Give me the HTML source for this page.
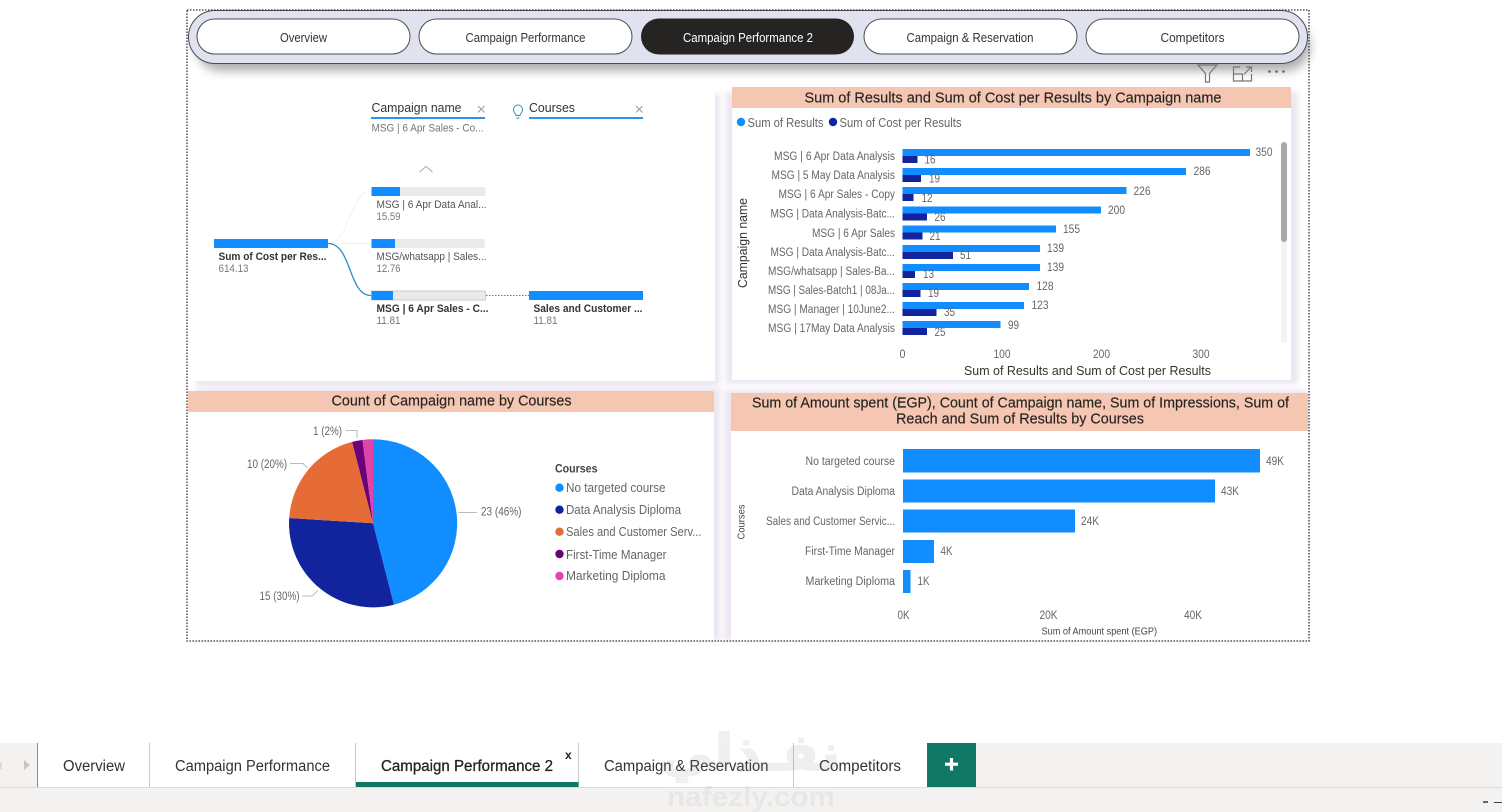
<!DOCTYPE html>
<html lang="en">
<head>
<meta charset="utf-8">
<title>Campaign Performance 2</title>
<style>
html,body{margin:0;padding:0;background:#fff;width:1502px;height:812px;overflow:hidden}
svg{display:block}
text{font-family:"Liberation Sans",sans-serif}
.g{fill:#666;font-size:11.5px}
.d{fill:#666;font-size:12.5px}
.b{fill:#333;font-size:11px;font-weight:bold}
.v{fill:#777;font-size:11px}
.t{fill:#252423;font-size:14.5px;stroke:#252423;stroke-width:.15}
.n{fill:#333;font-size:13px}
.tab{fill:#333;font-size:15.5px}
.soft{filter:blur(.3px)}
</style>
</head>
<body>
<svg width="1502" height="812" viewBox="0 0 1502 812" xmlns="http://www.w3.org/2000/svg">
<defs>
<filter id="sh" x="-5%" y="-40%" width="110%" height="190%"><feGaussianBlur stdDeviation="5"/></filter>
<filter id="ps" x="-5%" y="-5%" width="110%" height="110%"><feGaussianBlur stdDeviation="3"/></filter>
</defs>
<rect width="1502" height="812" fill="#fff"/>
<g class="soft">

<!-- panel shadows -->
<rect x="196" y="94" width="524" height="292" fill="#ebe5f1" filter="url(#ps)"/>
<rect x="726" y="92" width="572" height="292" fill="#ebe5f1" filter="url(#ps)"/>
<rect x="196" y="388" width="524" height="252" fill="#ebe5f1" filter="url(#ps)"/>
<rect x="724" y="390" width="584" height="250" fill="#ebe5f1" filter="url(#ps)"/>

<!-- nav -->
<rect x="196" y="21" width="1114" height="50" rx="25" fill="#777" opacity=".6" filter="url(#sh)"/>
<rect x="188.500" y="10.500" width="1119" height="53" rx="26.500" fill="#e0e2f0" stroke="#4a4a55"/>
<rect x="197" y="19" width="213" height="35" rx="17.500" fill="#fff" stroke="#4c4c4c"/>
<rect x="419" y="19" width="213" height="35" rx="17.500" fill="#fff" stroke="#4c4c4c"/>
<rect x="641" y="18.500" width="213" height="36" rx="18" fill="#252423"/>
<rect x="864" y="19" width="213" height="35" rx="17.500" fill="#fff" stroke="#4c4c4c"/>
<rect x="1086" y="19" width="213" height="35" rx="17.500" fill="#fff" stroke="#4c4c4c"/>
<text class="n" x="280" y="42" textLength="47" lengthAdjust="spacingAndGlyphs">Overview</text>
<text class="n" x="465.500" y="42" textLength="120" lengthAdjust="spacingAndGlyphs">Campaign Performance</text>
<text class="n" x="683" y="42" textLength="130" lengthAdjust="spacingAndGlyphs" style="fill:#fff">Campaign Performance 2</text>
<text class="n" x="906.500" y="42" textLength="127" lengthAdjust="spacingAndGlyphs">Campaign &amp; Reservation</text>
<text class="n" x="1160.500" y="42" textLength="64" lengthAdjust="spacingAndGlyphs">Competitors</text>

<!-- top-left panel: decomposition tree -->
<rect x="188" y="88" width="527" height="293" fill="#fff"/>
<text x="371.500" y="112" textLength="90" lengthAdjust="spacingAndGlyphs" style="fill:#333;font-size:13px">Campaign name</text>
<rect x="371" y="117" width="114" height="2" fill="#2a93f0"/>
<path d="M478 106l6.500 6.500M484.500 106l-6.500 6.500" stroke="#999" fill="none"/>
<text class="v" x="371.500" y="131.500" textLength="112" lengthAdjust="spacingAndGlyphs">MSG | 6 Apr Sales - Co...</text>
<path d="M516 115.500c0-2-2.500-2.500-2.500-6a4.500 4.500 0 0 1 9 0c0 3.500-2.500 4-2.500 6zM516.500 118h3" stroke="#2a8fc8" fill="none"/>
<text x="529" y="112" textLength="46" lengthAdjust="spacingAndGlyphs" style="fill:#333;font-size:13px">Courses</text>
<rect x="529" y="117" width="114" height="2" fill="#2a93f0"/>
<path d="M636 106l6.500 6.500M642.500 106l-6.500 6.500" stroke="#999" fill="none"/>
<path d="M419.500 172l6.500-5.500 6.500 5.500" stroke="#bbb" fill="none" stroke-width="1.300"/>

<path d="M328 243.500C350 243.500 350 191 371 191" stroke="#f2f2f2" fill="none"/>
<path d="M328 243.500H371" stroke="#f0f0f0" fill="none"/>
<path d="M328 243.500C352 243.500 348 295.500 371 295.500" stroke="#2a8fc8" fill="none" stroke-width="1.300"/>
<path d="M486 295.500H529" stroke="#2a8fc8" fill="none" stroke-dasharray="1.500 1.500"/>

<rect x="214" y="239" width="114" height="9" fill="#118dff"/>
<text class="b" x="218.500" y="260" textLength="108" lengthAdjust="spacingAndGlyphs">Sum of Cost per Res...</text>
<text class="v" x="218.500" y="272" textLength="30" lengthAdjust="spacingAndGlyphs">614.13</text>

<rect x="371.500" y="187" width="114" height="9" fill="#eaeaea"/>
<rect x="371.500" y="187" width="28.500" height="9" fill="#118dff"/>
<text class="v" x="376.500" y="208" textLength="110" lengthAdjust="spacingAndGlyphs" style="fill:#555">MSG | 6 Apr Data Anal...</text>
<text class="v" x="376.500" y="220" textLength="24" lengthAdjust="spacingAndGlyphs">15.59</text>

<rect x="371.500" y="239" width="113" height="9" fill="#eaeaea"/>
<rect x="371.500" y="239" width="23.500" height="9" fill="#118dff"/>
<text class="v" x="376.500" y="260" textLength="110" lengthAdjust="spacingAndGlyphs" style="fill:#555">MSG/whatsapp | Sales...</text>
<text class="v" x="376.500" y="272" textLength="24" lengthAdjust="spacingAndGlyphs">12.76</text>

<rect x="371.500" y="291" width="114" height="9" fill="#eaeaea" stroke="#ccc"/>
<rect x="371.500" y="291" width="21.500" height="9" fill="#118dff"/>
<text class="b" x="376.500" y="312" textLength="112" lengthAdjust="spacingAndGlyphs">MSG | 6 Apr Sales - C...</text>
<text class="v" x="376.500" y="324" textLength="24" lengthAdjust="spacingAndGlyphs">11.81</text>

<rect x="529" y="291" width="114" height="9" fill="#118dff"/>
<text class="b" x="533.500" y="312" textLength="109" lengthAdjust="spacingAndGlyphs">Sales and Customer ...</text>
<text class="v" x="533.500" y="324" textLength="24" lengthAdjust="spacingAndGlyphs">11.81</text>

<!-- visual header icons -->
<path d="M1198 65h19l-7.500 8.500v8.500h-4v-8.500z" fill="none" stroke="#777" stroke-width="1.200"/>
<path d="M1240 67h-6.500v14h18v-7M1233.500 74h9v7M1244 74.500l7-7.500M1246 67h5.500v5" fill="none" stroke="#777" stroke-width="1.200"/>
<circle cx="1269.500" cy="71.500" r="1.300" fill="#666"/><circle cx="1276.500" cy="71.500" r="1.300" fill="#666"/><circle cx="1283.500" cy="71.500" r="1.300" fill="#666"/>

<!-- top-right panel -->
<rect x="732" y="88" width="559" height="292" fill="#fff"/>
<rect x="732" y="87" width="559" height="21" fill="#f5c7b2"/>
<text class="t" x="804.500" y="102.500" textLength="417" lengthAdjust="spacingAndGlyphs">Sum of Results and Sum of Cost per Results by Campaign name</text>
<circle cx="741" cy="122" r="4.200" fill="#118dff"/>
<text class="d" x="747.500" y="127" textLength="76" lengthAdjust="spacingAndGlyphs">Sum of Results</text>
<circle cx="833" cy="122" r="4.200" fill="#12239e"/>
<text class="d" x="839.500" y="127" textLength="122" lengthAdjust="spacingAndGlyphs">Sum of Cost per Results</text>

<rect x="1281" y="142" width="6" height="201" rx="3" fill="#f2f2f2"/>
<rect x="1281" y="142" width="6" height="100" rx="3" fill="#a9a9a9"/>

<text class="g" x="774" y="160" textLength="121" lengthAdjust="spacingAndGlyphs">MSG | 6 Apr Data Analysis</text>
<text class="g" x="771.500" y="179" textLength="123.500" lengthAdjust="spacingAndGlyphs">MSG | 5 May Data Analysis</text>
<text class="g" x="778.500" y="198" textLength="116.500" lengthAdjust="spacingAndGlyphs">MSG | 6 Apr Sales - Copy</text>
<text class="g" x="770.500" y="217.500" textLength="124.500" lengthAdjust="spacingAndGlyphs">MSG | Data Analysis-Batc...</text>
<text class="g" x="812" y="237" textLength="83" lengthAdjust="spacingAndGlyphs">MSG | 6 Apr Sales</text>
<text class="g" x="770.500" y="256" textLength="124.500" lengthAdjust="spacingAndGlyphs">MSG | Data Analysis-Batc...</text>
<text class="g" x="768" y="275" textLength="127" lengthAdjust="spacingAndGlyphs">MSG/whatsapp | Sales-Ba...</text>
<text class="g" x="768" y="294" textLength="127" lengthAdjust="spacingAndGlyphs">MSG | Sales-Batch1 | 08Ja...</text>
<text class="g" x="768" y="313" textLength="127" lengthAdjust="spacingAndGlyphs">MSG | Manager | 10June2...</text>
<text class="g" x="768" y="332" textLength="127" lengthAdjust="spacingAndGlyphs">MSG | 17May Data Analysis</text>

<g fill="#118dff">
<rect x="902.500" y="149" width="347.500" height="7"/>
<rect x="902.500" y="168" width="283.500" height="7"/>
<rect x="902.500" y="187" width="224" height="7"/>
<rect x="902.500" y="206.500" width="198.500" height="7"/>
<rect x="902.500" y="225.500" width="153.500" height="7"/>
<rect x="902.500" y="245" width="137.500" height="7"/>
<rect x="902.500" y="264" width="137.500" height="7"/>
<rect x="902.500" y="283" width="126.500" height="7"/>
<rect x="902.500" y="302" width="121.500" height="7"/>
<rect x="902.500" y="321" width="98" height="7"/>
</g>
<g fill="#12239e">
<rect x="902.500" y="156" width="15" height="7"/>
<rect x="902.500" y="175" width="18.500" height="7"/>
<rect x="902.500" y="194" width="11" height="7"/>
<rect x="902.500" y="213.500" width="24.500" height="7"/>
<rect x="902.500" y="232.500" width="20" height="7"/>
<rect x="902.500" y="252" width="50.500" height="7"/>
<rect x="902.500" y="271" width="12.500" height="7"/>
<rect x="902.500" y="290" width="18" height="7"/>
<rect x="902.500" y="309" width="34" height="7"/>
<rect x="902.500" y="328" width="24.500" height="7"/>
</g>
<text class="g" x="1255.500" y="156" textLength="17" lengthAdjust="spacingAndGlyphs">350</text>
<text class="g" x="1193.500" y="175" textLength="17" lengthAdjust="spacingAndGlyphs">286</text>
<text class="g" x="1133.500" y="195" textLength="17" lengthAdjust="spacingAndGlyphs">226</text>
<text class="g" x="1108" y="214" textLength="17" lengthAdjust="spacingAndGlyphs">200</text>
<text class="g" x="1063" y="233" textLength="17" lengthAdjust="spacingAndGlyphs">155</text>
<text class="g" x="1047" y="252" textLength="17" lengthAdjust="spacingAndGlyphs">139</text>
<text class="g" x="1047" y="271" textLength="17" lengthAdjust="spacingAndGlyphs">139</text>
<text class="g" x="1036.500" y="290" textLength="17" lengthAdjust="spacingAndGlyphs">128</text>
<text class="g" x="1031.500" y="309" textLength="17" lengthAdjust="spacingAndGlyphs">123</text>
<text class="g" x="1008" y="329" textLength="11" lengthAdjust="spacingAndGlyphs">99</text>
<text class="g" x="924.500" y="163.500" textLength="11" lengthAdjust="spacingAndGlyphs">16</text>
<text class="g" x="929" y="182.500" textLength="11" lengthAdjust="spacingAndGlyphs">19</text>
<text class="g" x="921.500" y="202" textLength="11" lengthAdjust="spacingAndGlyphs">12</text>
<text class="g" x="934.500" y="221" textLength="11" lengthAdjust="spacingAndGlyphs">26</text>
<text class="g" x="929.500" y="240" textLength="11" lengthAdjust="spacingAndGlyphs">21</text>
<text class="g" x="960" y="259" textLength="11" lengthAdjust="spacingAndGlyphs">51</text>
<text class="g" x="923" y="278" textLength="11" lengthAdjust="spacingAndGlyphs">13</text>
<text class="g" x="928" y="297" textLength="11" lengthAdjust="spacingAndGlyphs">19</text>
<text class="g" x="944" y="316" textLength="11" lengthAdjust="spacingAndGlyphs">35</text>
<text class="g" x="934.500" y="336" textLength="11" lengthAdjust="spacingAndGlyphs">25</text>
<text class="g" x="899.500" y="358" textLength="6" lengthAdjust="spacingAndGlyphs">0</text>
<text class="g" x="993.500" y="358" textLength="17" lengthAdjust="spacingAndGlyphs">100</text>
<text class="g" x="1093" y="358" textLength="17" lengthAdjust="spacingAndGlyphs">200</text>
<text class="g" x="1192.500" y="358" textLength="17" lengthAdjust="spacingAndGlyphs">300</text>
<text x="964" y="375" textLength="247" lengthAdjust="spacingAndGlyphs" style="fill:#333;font-size:13px">Sum of Results and Sum of Cost per Results</text>
<text transform="translate(747,288) rotate(-90)" textLength="90" lengthAdjust="spacingAndGlyphs" style="fill:#333;font-size:13px">Campaign name</text>

<!-- bottom-left panel -->
<rect x="188" y="391" width="526" height="249" fill="#fff"/>
<rect x="188" y="391" width="526" height="21" fill="#f5c7b2"/>
<text class="t" x="331.500" y="405.500" textLength="240" lengthAdjust="spacingAndGlyphs">Count of Campaign name by Courses</text>

<path d="M373 523.300V439.300A84 84 0 0 1 393.900 604.700Z" fill="#118dff"/>
<path d="M373 523.300L393.900 604.700A84 84 0 0 1 289.200 518Z" fill="#12239e"/>
<path d="M373 523.300L289.200 518A84 84 0 0 1 352.100 441.900Z" fill="#e66c37"/>
<path d="M373 523.300L352.100 441.900A84 84 0 0 1 362.500 440Z" fill="#6b007b"/>
<path d="M373 523.300L362.500 440A84 84 0 0 1 373 439.300Z" fill="#e044a7"/>

<path d="M458.500 512.500H477M302 596H312L318 590.500M290 463.500H303L307.500 468M346 430.500H357V438" stroke="#bbb" fill="none"/>
<text class="g" x="481" y="515.500" textLength="40.500" lengthAdjust="spacingAndGlyphs">23 (46%)</text>
<text class="g" x="259.500" y="600" textLength="40" lengthAdjust="spacingAndGlyphs">15 (30%)</text>
<text class="g" x="247" y="468" textLength="40" lengthAdjust="spacingAndGlyphs">10 (20%)</text>
<text class="g" x="313" y="435" textLength="29" lengthAdjust="spacingAndGlyphs">1 (2%)</text>

<text x="555" y="472.500" textLength="42.500" lengthAdjust="spacingAndGlyphs" style="fill:#444;font-size:12px;font-weight:bold">Courses</text>
<circle cx="559.500" cy="487.700" r="4.200" fill="#118dff"/>
<circle cx="559.500" cy="509.700" r="4.200" fill="#12239e"/>
<circle cx="559.500" cy="531.700" r="4.200" fill="#e66c37"/>
<circle cx="559.500" cy="554" r="4.200" fill="#6b007b"/>
<circle cx="559.500" cy="576" r="4.200" fill="#e044a7"/>
<text class="d" x="566" y="492" textLength="99.500" lengthAdjust="spacingAndGlyphs">No targeted course</text>
<text class="d" x="566" y="514" textLength="115" lengthAdjust="spacingAndGlyphs">Data Analysis Diploma</text>
<text class="d" x="566" y="536" textLength="135.500" lengthAdjust="spacingAndGlyphs">Sales and Customer Serv...</text>
<text class="d" x="566" y="559" textLength="100.500" lengthAdjust="spacingAndGlyphs">First-Time Manager</text>
<text class="d" x="566" y="580" textLength="99.500" lengthAdjust="spacingAndGlyphs">Marketing Diploma</text>

<!-- bottom-right panel -->
<rect x="731" y="393" width="577" height="247" fill="#fff"/>
<rect x="731" y="393" width="577" height="38" fill="#f5c7b2"/>
<text class="t" x="752" y="407.500" textLength="537" lengthAdjust="spacingAndGlyphs">Sum of Amount spent (EGP), Count of Campaign name, Sum of Impressions, Sum of</text>
<text class="t" x="896" y="423.500" textLength="248" lengthAdjust="spacingAndGlyphs">Reach and Sum of Results by Courses</text>

<g fill="#118dff">
<rect x="903" y="449" width="357" height="23.500"/>
<rect x="903" y="479.500" width="312" height="23"/>
<rect x="903" y="509.500" width="172" height="23"/>
<rect x="903" y="540" width="31" height="23"/>
<rect x="903" y="570" width="7.500" height="23"/>
</g>
<text class="g" x="805.500" y="465" textLength="89.500" lengthAdjust="spacingAndGlyphs">No targeted course</text>
<text class="g" x="791.500" y="495" textLength="103.500" lengthAdjust="spacingAndGlyphs">Data Analysis Diploma</text>
<text class="g" x="766" y="525" textLength="129" lengthAdjust="spacingAndGlyphs">Sales and Customer Servic...</text>
<text class="g" x="805" y="555" textLength="90" lengthAdjust="spacingAndGlyphs">First-Time Manager</text>
<text class="g" x="805.500" y="585" textLength="89.500" lengthAdjust="spacingAndGlyphs">Marketing Diploma</text>
<text class="g" x="1266" y="465" textLength="18" lengthAdjust="spacingAndGlyphs">49K</text>
<text class="g" x="1221" y="495" textLength="18" lengthAdjust="spacingAndGlyphs">43K</text>
<text class="g" x="1081" y="525" textLength="18" lengthAdjust="spacingAndGlyphs">24K</text>
<text class="g" x="940.500" y="555" textLength="12" lengthAdjust="spacingAndGlyphs">4K</text>
<text class="g" x="917.500" y="585" textLength="12" lengthAdjust="spacingAndGlyphs">1K</text>
<text class="g" x="897.500" y="619" textLength="12" lengthAdjust="spacingAndGlyphs">0K</text>
<text class="g" x="1039.500" y="619" textLength="18" lengthAdjust="spacingAndGlyphs">20K</text>
<text class="g" x="1184" y="619" textLength="18" lengthAdjust="spacingAndGlyphs">40K</text>
<text x="1041.500" y="634.500" textLength="115.500" lengthAdjust="spacingAndGlyphs" style="fill:#444;font-size:10px">Sum of Amount spent (EGP)</text>
<text transform="translate(744.500,539.500) rotate(-90)" textLength="35" lengthAdjust="spacingAndGlyphs" style="fill:#444;font-size:10px">Courses</text>

<!-- tab bar -->
<rect x="0" y="743" width="1502" height="69" fill="#f3f2f1"/>
<rect x="38" y="743" width="889" height="44" fill="#fff"/>
<rect x="0" y="787" width="1502" height="1" fill="#dcdcdc"/>
<rect x="37" y="743" width="1" height="44" fill="#8a8a8a"/>
<rect x="149" y="743" width="1" height="44" fill="#c8c8c8"/>
<rect x="355" y="743" width="1" height="44" fill="#c8c8c8"/>
<rect x="578" y="743" width="1" height="44" fill="#c8c8c8"/>
<rect x="793" y="743" width="1" height="44" fill="#c8c8c8"/>
<rect x="356" y="782" width="222.500" height="5" fill="#117865"/>
<path d="M24 760l6 5-6 5z" fill="#c8c6c4"/>
<rect x="0" y="762" width="1.500" height="7" fill="#d8d6d4"/>
<text class="tab" x="63" y="771" textLength="62" lengthAdjust="spacingAndGlyphs">Overview</text>
<text class="tab" x="175" y="771" textLength="155" lengthAdjust="spacingAndGlyphs">Campaign Performance</text>
<text class="tab" x="381" y="771" textLength="172" lengthAdjust="spacingAndGlyphs" style="fill:#252423;stroke:#252423;stroke-width:.3">Campaign Performance 2</text>
<text class="tab" x="604" y="771" textLength="164.500" lengthAdjust="spacingAndGlyphs">Campaign &amp; Reservation</text>
<text class="tab" x="819" y="771" textLength="82" lengthAdjust="spacingAndGlyphs">Competitors</text>
<text x="565" y="759" style="fill:#252423;font-size:12px;font-weight:bold">x</text>
<rect x="927" y="743" width="49" height="44" fill="#117865"/>
<path d="M951.500 758v12.500M945 764.200h13" stroke="#fff" stroke-width="3.200"/>

<!-- bottom-right marks -->
<rect x="1483" y="801" width="5" height="2" fill="#666"/>
<rect x="1494" y="802" width="8" height="1" fill="#444"/>

<!-- watermark -->
<text x="660" y="770" textLength="180" lengthAdjust="spacingAndGlyphs" style="font-family:'DejaVu Sans',sans-serif;font-size:50px;font-weight:bold;fill:#8c8c8c;stroke:#8c8c8c;stroke-width:2;opacity:.13">نفـذلي</text>
<text x="667" y="806" textLength="168" lengthAdjust="spacingAndGlyphs" style="font-size:28px;font-weight:bold;fill:#8c8c8c;opacity:.1">nafezly.com</text>
</g>

<!-- dotted frame -->
<rect x="187" y="10" width="1122" height="631" fill="none" stroke="#333" stroke-width="1.300" stroke-dasharray="1.500 1.500"/>
</svg>
</body>
</html>
